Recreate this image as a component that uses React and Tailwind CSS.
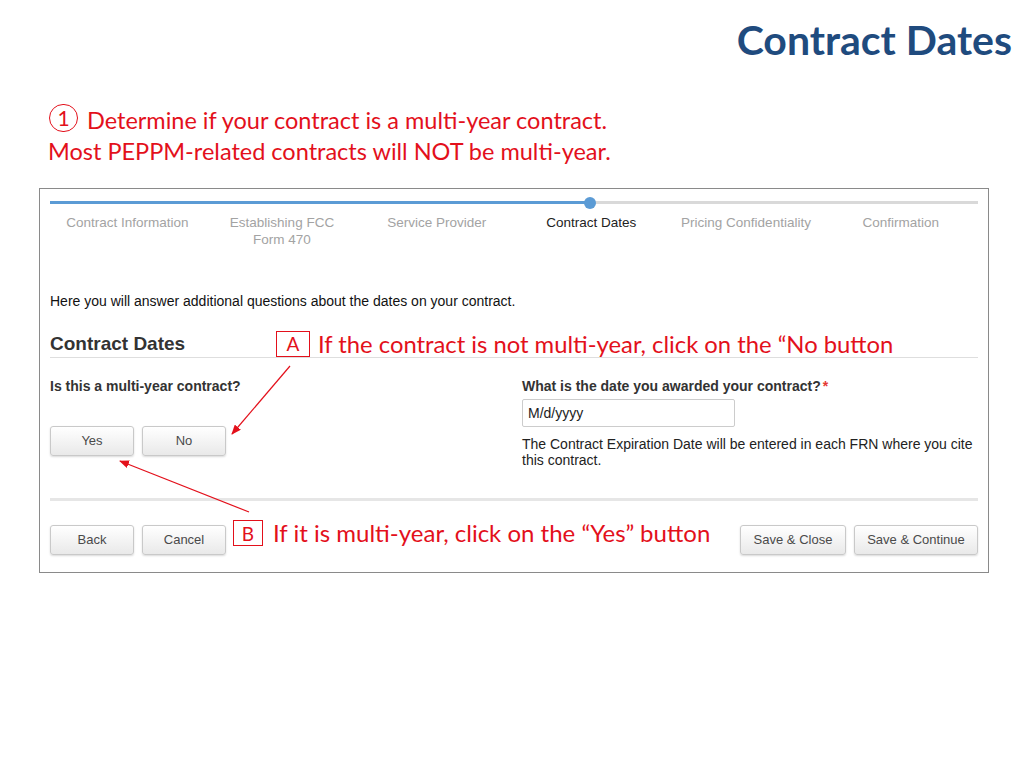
import React from "react";

function Btn({ children, w }) {
  return (
    <div
      className={`${w} h-[30px] flex items-center justify-center rounded-[3px] border border-[#c9c9c9] bg-gradient-to-b from-white to-[#e9e9e9] shadow-[0_1px_2px_rgba(0,0,0,0.15)] text-[13px] text-[#4a4a4a]`}
    >
      {children}
    </div>
  );
}

export default function App() {
  const steps = [
    ["Contract Information", false],
    ["Establishing FCC\nForm 470", false],
    ["Service Provider", false],
    ["Contract Dates", true],
    ["Pricing Confidentiality", false],
    ["Confirmation", false],
  ];
  return (
    <div className="relative w-[1024px] h-[768px] bg-white overflow-hidden font-['Liberation_Sans',Arial,sans-serif]">
      {/* slide title */}
      <div className="flex justify-end pr-[12px] pt-[14px]">
        <h1 className="font-['Lato',sans-serif] font-bold text-[41px] leading-[51px] text-[#1f4b7e]">
          Contract Dates
        </h1>
      </div>

      {/* red instructions */}
      <div className="pl-[49px] mt-[40px] font-['Lato',sans-serif] text-[23.5px] leading-[31px] text-[#e3101b]">
        <div className="flex items-center h-[31px]">
          <span className="inline-flex items-center justify-center w-[29px] h-[28px] mt-[-6px] rounded-full border-[1.5px] border-[#e3101b] text-[21px] leading-none mr-[9px]">
            1
          </span>
          <span>Determine if your contract is a multi-year contract.</span>
        </div>
        <div className="ml-[-1px]">Most PEPPM-related contracts will NOT be multi-year.</div>
      </div>

      {/* screenshot box */}
      <div className="absolute left-[39px] top-[188px] w-[950px] h-[385px] border border-[#8a8a8a] px-[10px]">
        {/* progress bar */}
        <div className="relative mt-[12px] h-[3px] bg-[#d9d9d9]">
          <div className="h-[3px] w-[540px] bg-[#5b9bd5]" />
          <div className="absolute left-[534px] top-[-4.5px] w-[12px] h-[12px] rounded-full bg-[#5b9bd5]" />
        </div>
        {/* steps */}
        <div className="grid grid-cols-6 mt-[10px] text-[13.5px] leading-[17px]">
          {steps.map(([label, active]) => (
            <div
              key={label}
              className={`text-center whitespace-pre-line ${active ? "text-[#222]" : "text-[#a3a3a3]"}`}
            >
              {label}
            </div>
          ))}
        </div>

        <p className="mt-[45px] text-[14px] leading-[16px] text-[#111]">
          Here you will answer additional questions about the dates on your contract.
        </p>

        <div className="mt-[23px] pb-[2px] border-b border-[#dedede]">
          <h2 className="font-bold text-[19px] leading-[23px] text-[#333]">Contract Dates</h2>
        </div>

        <div className="flex items-start mt-[20px]">
          <div className="w-[472px]">
            <div className="font-bold text-[14px] leading-[16px] text-[#333]">Is this a multi-year contract?</div>
            <div className="flex gap-[8px] mt-[32px]">
              <Btn w="w-[84px]">Yes</Btn>
              <Btn w="w-[84px]">No</Btn>
            </div>
          </div>
          <div className="flex-1">
            <div className="font-bold text-[14px] leading-[16px] text-[#333]">
              What is the date you awarded your contract?<span className="text-[#e53935] ml-[2px]">*</span>
            </div>
            <div className="mt-[5px] w-[213px] h-[28px] border border-[#cccccc] rounded-[2px] flex items-center pl-[5px] text-[14px] text-[#222]">
              M/d/yyyy
            </div>
            <p className="mt-[9px] text-[14px] leading-[16px] text-[#222]">
              The Contract Expiration Date will be entered in each FRN where you cite
              <br />
              this contract.
            </p>
          </div>
        </div>

        <div className="mt-[30px] h-[3px] bg-[#e6e6e6]" />

        <div className="flex items-center justify-between mt-[24px]">
          <div className="flex gap-[8px]">
            <Btn w="w-[84px]">Back</Btn>
            <Btn w="w-[84px]">Cancel</Btn>
          </div>
          <div className="flex gap-[8px]">
            <Btn w="w-[106px]">Save &amp; Close</Btn>
            <Btn w="w-[124px]">Save &amp; Continue</Btn>
          </div>
        </div>
      </div>

      {/* annotation A */}
      <div className="absolute left-[276px] top-[330px] flex items-center font-['Lato',sans-serif] text-[#e3101b]">
        <div className="w-[34px] h-[26px] border border-[#e3101b] flex items-center justify-center text-[19px] leading-none">
          A
        </div>
        <span className="ml-[8px] text-[23.8px] leading-[26px] mt-[1px]">
          If the contract is not multi-year, click on the “No button
        </span>
      </div>

      {/* annotation B */}
      <div className="absolute left-[233px] top-[520px] flex items-center font-['Lato',sans-serif] text-[#e3101b]">
        <div className="w-[30px] h-[26px] border border-[#e3101b] bg-white flex items-center justify-center text-[19px] leading-none">
          B
        </div>
        <span className="ml-[10px] text-[24px] leading-[26px]">
          If it is multi-year, click on the “Yes” button
        </span>
      </div>

      {/* arrows */}
      <svg className="absolute inset-0 pointer-events-none" width="1024" height="768" viewBox="0 0 1024 768">
        <defs>
          <marker id="ah" markerWidth="10" markerHeight="8" refX="9" refY="4" orient="auto" markerUnits="userSpaceOnUse">
            <path d="M0,0 L10,4 L0,8 Z" fill="#e3101b" />
          </marker>
        </defs>
        <line x1="290" y1="366" x2="232" y2="434" stroke="#e3101b" strokeWidth="1.2" markerEnd="url(#ah)" />
        <line x1="249" y1="512" x2="120" y2="461" stroke="#e3101b" strokeWidth="1.2" markerEnd="url(#ah)" />
      </svg>
    </div>
  );
}
